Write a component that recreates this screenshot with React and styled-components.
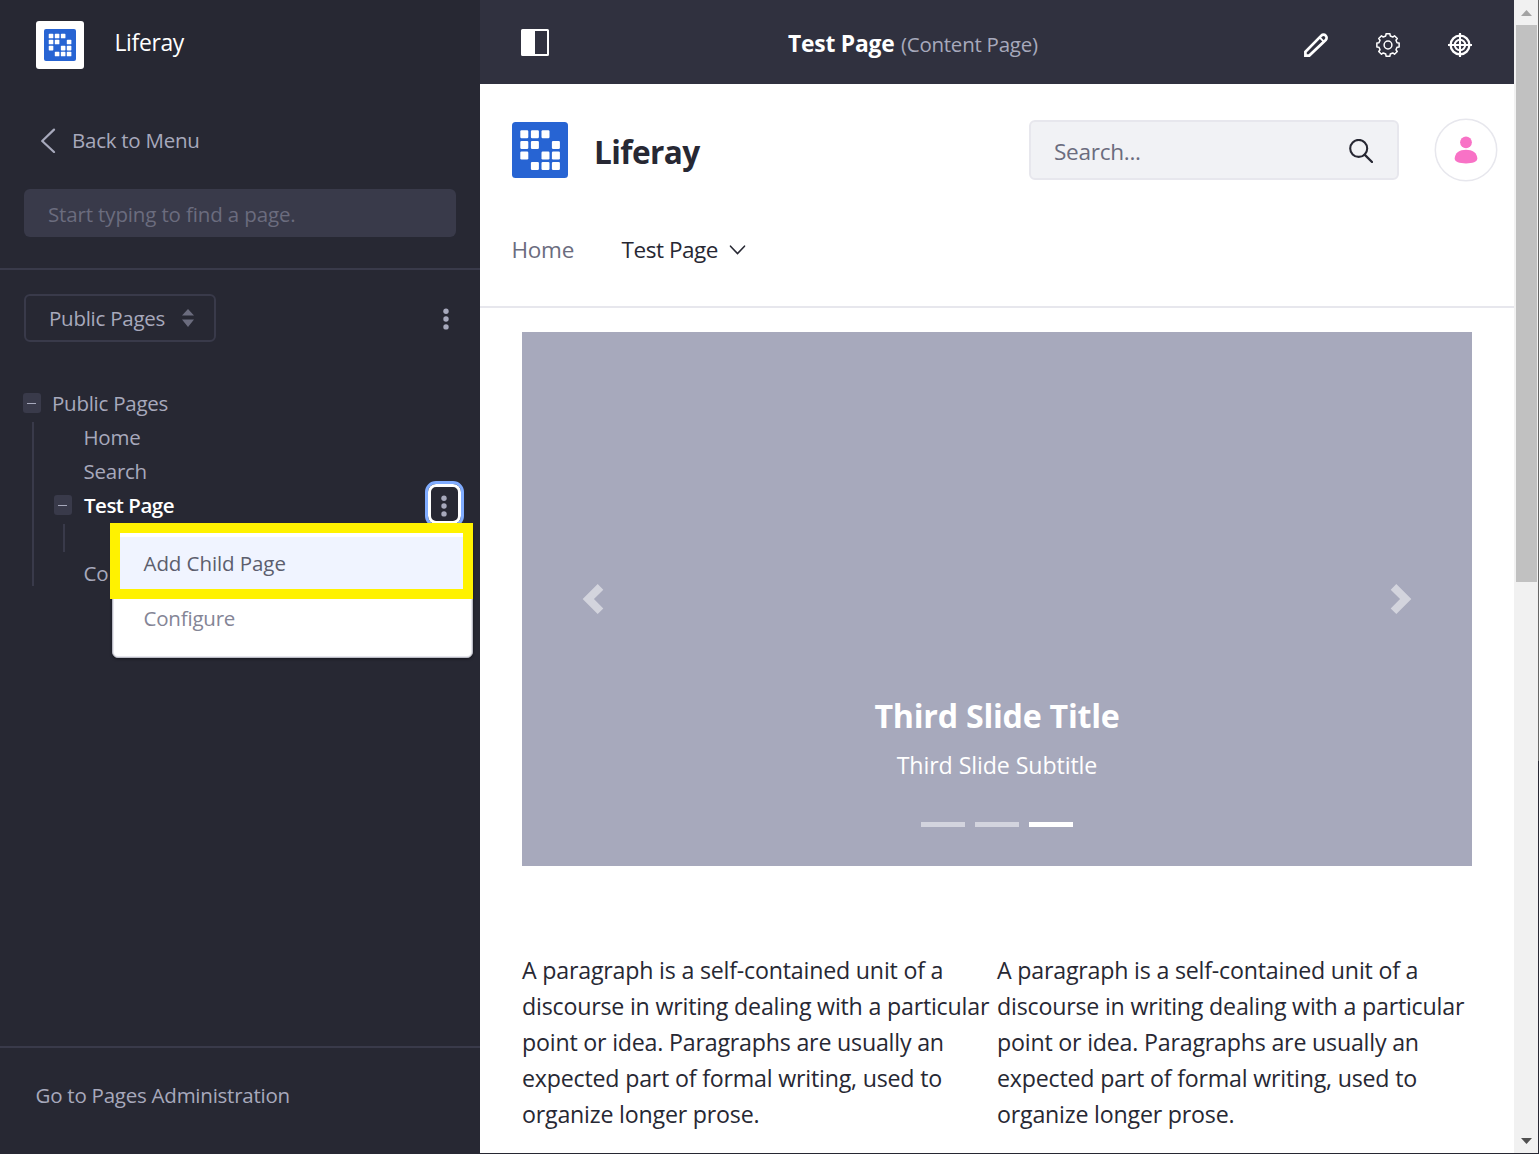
import React from "react";
import styled, { createGlobalStyle, css } from "styled-components";

const color = {
  sidebar: "#272833",
  bar: "#30313f",
  line: "#393a4a",
  muted: "#a7a9bc",
  faint: "#6b6c7e",
  ink: "#272833",
  border: "#e7e7ed",
};

const GlobalStyle = createGlobalStyle`
  *, *::before, *::after { box-sizing: border-box; }
  body {
    margin: 0;
    overflow: hidden;
    font-family: "Open Sans", "Noto Sans", sans-serif;
    font-size: 20.5px;
    letter-spacing: -0.25px;
    color: ${color.ink};
  }
  svg { display: block; flex: none; }
`;

const Shell = styled.div`
  display: grid;
  grid-template-columns: 480px 1fr 24px 1px;
  grid-template-rows: 1153px 1px;
  width: 1539px;
  height: 1154px;
  background: #fff;
`;

/* ---------- Sidebar ---------- */

const Sidebar = styled.aside`
  grid-row: 1 / -1;
  display: flex;
  flex-direction: column;
  background: ${color.sidebar};
  color: ${color.muted};
`;

const SiteHead = styled.div`
  display: flex;
  gap: 30.5px;
  height: 116px;
  padding: 21px 36px 0;
`;

const SiteLogo = styled.div`
  display: grid;
  place-items: center;
  width: 48px;
  height: 48px;
  background: #fff;
  border-radius: 3px;
`;

const SiteName = styled.span`
  height: 44px;
  line-height: 44px;
  font-size: 22.9px;
  letter-spacing: -0.35px;
  color: #fff;
`;

const BackLink = styled.div`
  display: flex;
  align-items: center;
  gap: 16px;
  height: 48px;
  padding-left: 40px;
`;

const FilterField = styled.input`
  width: 432px;
  height: 48px;
  margin: 25px 24px 31px;
  padding: 1px 24px 0;
  border: 0;
  border-radius: 6px;
  background: ${color.line};
  font: inherit;
  letter-spacing: -0.14px;
  color: #fff;
  &::placeholder { color: ${color.faint}; opacity: 1; }
`;

const SetRow = styled.div`
  display: flex;
  align-items: center;
  justify-content: space-between;
  height: 98px;
  padding: 1px 30.5px 0 24px;
  border-top: 2px solid ${color.line};
`;

const SetButton = styled.div`
  display: flex;
  align-items: center;
  justify-content: space-between;
  width: 192px;
  height: 48px;
  margin-top: -1px;
  padding: 0 20.5px 0 23px;
  border: 2px solid ${color.line};
  border-radius: 6px;
`;

const Tree = styled.div`
  flex: 1;
  padding: 20px 0 0 23px;
`;

const TreeRow = styled.div`
  position: relative;
  display: flex;
  align-items: center;
  height: 34px;
  gap: ${(p) => p.$gap ?? 0}px;
  ${(p) => p.$current && css`
    font-weight: 600;
    letter-spacing: -0.5px;
    color: #fff;
  `}
`;

const Branch = styled.div`
  display: flow-root;
  margin: ${(p) => (p.$nested ? "2px 0 4px 9px" : "2px 0 0 9px")};
  height: ${(p) => p.$height}px;
  border-left: 2px solid ${color.line};
`;

const BranchList = styled.div`
  margin-top: -2px;
  padding-left: ${(p) => p.$indent}px;
`;

const Leaf = styled(TreeRow)`
  padding-left: 29.5px;
`;

const Toggle = styled.span`
  display: flex;
  align-items: center;
  width: 18px;
  height: 20px;
  padding-left: 4px;
  border-radius: 3px;
  background: ${color.line};
  &::after {
    content: "";
    width: 9px;
    height: 1px;
    background: ${color.muted};
  }
`;

const FocusedKebab = styled.span`
  position: absolute;
  left: 371px;
  top: -7px;
  display: grid;
  place-items: center;
  width: 39px;
  height: 46px;
  padding: 3px 1px 0 0;
  border: 3px solid #80acff;
  border-radius: 11px;
  box-shadow: inset 0 0 0 3px #fff;
`;

const Menu = styled.div`
  position: absolute;
  left: 58px;
  top: 38px;
  z-index: 2;
  width: 361px;
  height: 132px;
  padding: 10px 1px 0;
  background: #fff;
  border: 1px solid #b9bac4;
  border-radius: 6px;
  box-shadow: inset 0 0 0 1px #e7e7ed, 0 1px 3px rgba(0, 0, 0, 0.45);
  font-weight: 400;
`;

const MenuItem = styled.div`
  height: 54px;
  padding-left: 29.5px;
  line-height: ${(p) => (p.$active ? 52 : 55)}px;
  letter-spacing: ${(p) => (p.$active ? "-0.08px" : "-0.2px")};
  color: ${(p) => (p.$active ? "#5c5e6d" : "#848596")};
  background: ${(p) => (p.$active ? "#f0f4ff" : "transparent")};
`;

const Highlight = styled.div`
  position: absolute;
  left: 56px;
  top: 35px;
  z-index: 3;
  width: 363px;
  height: 76px;
  border: 10px solid #fff200;
`;

const AdminLink = styled.div`
  height: 108px;
  padding-left: 35.5px;
  border-top: 2px solid ${color.line};
  line-height: 95px;
  letter-spacing: -0.24px;
`;

/* ---------- Page ---------- */

const Page = styled.main`
  min-width: 0;
  overflow: hidden;
`;

const ControlBar = styled.header`
  display: grid;
  grid-template-columns: 267px 1fr auto;
  align-items: center;
  height: 84px;
  padding: 0 42px 0 41px;
  background: ${color.bar};
  color: #fff;
`;

const PageTitle = styled.div`
  display: flex;
  align-items: center;
  gap: 6.5px;
  padding-top: 3px;
`;

const Strong = styled.strong`
  font-size: 22.8px;
  letter-spacing: -0.2px;
`;

const Kind = styled.span`
  color: ${color.muted};
`;

const Actions = styled.div`
  display: flex;
  gap: 48px;
  padding-top: 6px;
`;

const Masthead = styled.div`
  display: flex;
  align-items: center;
  height: 132px;
  padding: 0 16px 0 32px;
`;

const Brand = styled.h1`
  flex: 1;
  margin: 0;
  padding: 3px 0 0 26px;
  font-size: 31.6px;
  line-height: 40px;
  letter-spacing: -0.6px;
`;

const SearchBox = styled.div`
  display: flex;
  align-items: center;
  justify-content: space-between;
  width: 370px;
  height: 60px;
  padding: 2px 24px 0 23px;
  margin-right: 35px;
  border: 2px solid ${color.border};
  border-radius: 6px;
  background: #f1f2f5;
  font-size: 22.6px;
  letter-spacing: -0.3px;
  color: ${color.faint};
`;

const Nav = styled.nav`
  display: flex;
  align-items: center;
  height: 92px;
  padding: 0 0 23px 31.5px;
  border-bottom: 2px solid ${color.border};
  font-size: 22.5px;
`;

const NavItem = styled.span`
  display: flex;
  align-items: center;
  gap: 11px;
  margin-right: 47.5px;
  color: ${(p) => (p.$current ? color.ink : color.faint)};
  letter-spacing: ${(p) => (p.$current ? "-0.45px" : "-0.25px")};
`;

const Carousel = styled.section`
  display: grid;
  grid-template-columns: 142px 1fr 142px;
  align-items: center;
  justify-items: center;
  width: 950px;
  height: 534px;
  margin: 24px 0 86px 42px;
  background: ${color.muted};
  color: #fff;
`;

const Caption = styled.div`
  align-self: end;
  display: flex;
  flex-direction: column;
  align-items: center;
  padding-bottom: 39px;
`;

const SlideTitle = styled.h2`
  margin: 0;
  font-size: 32.2px;
  line-height: 44px;
  letter-spacing: -0.25px;
`;

const SlideText = styled.p`
  margin: 9px 0 39px;
  font-size: 23.2px;
  line-height: 36px;
  letter-spacing: -0.1px;
`;

const Indicators = styled.div`
  display: flex;
  gap: 10px;
`;

const Indicator = styled.span`
  width: 44px;
  height: 5px;
  background: #fff;
  opacity: ${(p) => (p.$active ? 1 : 0.5)};
`;

const Columns = styled.div`
  display: grid;
  grid-template-columns: 475px 475px;
  padding-left: 42px;
`;

const Paragraph = styled.p`
  margin: 0;
  font-size: 23.2px;
  line-height: 36px;
  letter-spacing: -0.2px;
`;

/* ---------- Window edge ---------- */

const Scrollbar = styled.div`
  display: flex;
  flex-direction: column;
  align-items: center;
  background: #f1f1f1;
`;

const ScrollArrow = styled.span`
  width: 11px;
  height: 6px;
  margin: ${(p) => (p.$down ? "556px 0 0 1px" : "10px 0 9px 1px")};
  background: ${(p) => (p.$down ? "#505050" : "#a3a3a3")};
  clip-path: ${(p) => (p.$down ? "polygon(0 0, 100% 0, 50% 100%)" : "polygon(50% 0, 100% 100%, 0 100%)")};
`;

const Thumb = styled.span`
  width: 21px;
  height: 557px;
  background: #c1c1c1;
`;

const RightEdge = styled.div`
  background: linear-gradient(#666 761px, ${color.sidebar} 761px);
`;

const BottomEdge = styled.div`
  grid-column: 2 / -1;
  background: ${color.sidebar};
`;

/* ---------- Icons ---------- */

const stops = [8.3, 18.9, 29.5, 39.9];
const cells = [
  [0, 0], [1, 0], [2, 0],
  [0, 1], [1, 1], [3, 1],
  [0, 2], [2, 2], [3, 2],
  [1, 3], [2, 3], [3, 3],
];

const LogoMark = ({ size }) => (
  <svg width={size} height={size} viewBox="0 0 56 56">
    <rect width="56" height="56" rx="3.5" fill="#2764d3" />
    {cells.map(([c, r]) => (
      <rect key={`${c}${r}`} x={stops[c]} y={stops[r]} width="8" height="8" rx="1.2" fill="#fff" />
    ))}
  </svg>
);

const Kebab = () => (
  <svg width="8" height="24" viewBox="0 0 8 24" fill={color.muted}>
    <circle cx="4" cy="4.2" r="2.7" />
    <circle cx="4" cy="12" r="2.7" />
    <circle cx="4" cy="19.9" r="2.7" />
  </svg>
);

const gearPath = (() => {
  const pts = [];
  for (let i = 0; i < 8; i += 1) {
    [[-14, 9.3], [-10, 11.3], [10, 11.3], [14, 9.3]].forEach(([deg, r]) => {
      const a = ((i * 45 + deg) * Math.PI) / 180;
      pts.push(`${(12 + r * Math.sin(a)).toFixed(2)} ${(12 - r * Math.cos(a)).toFixed(2)}`);
    });
  }
  return `M${pts.join("L")}Z`;
})();

const Pencil = () => (
  <svg width="24" height="24" viewBox="0 0 24 24" fill="none" stroke="#fff" strokeWidth="2.7">
    <path d="M1.4 22.6V18.9L17.3 2.6A3.1 3.1 0 0 1 21.7 7L5.3 22.6Z" />
    <path d="M15.6 4.4L19.8 8.6" strokeWidth="2" />
  </svg>
);

const Gear = () => (
  <svg width="24" height="24" viewBox="0 0 24 24" fill="none" stroke="#fff" strokeWidth="1.5" strokeLinejoin="round">
    <path d={gearPath} />
    <circle cx="12" cy="12" r="3.9" />
  </svg>
);

const Target = () => (
  <svg width="24" height="24" viewBox="0 0 24 24" fill="none" stroke="#fff" strokeWidth="2.3">
    <circle cx="12" cy="12" r="9.4" />
    <circle cx="12" cy="12" r="5.2" strokeWidth="2" />
    <path d="M12 0V24M0 12H24" strokeWidth="2.1" />
  </svg>
);

const Magnifier = () => (
  <svg width="24" height="24" viewBox="0 0 24 24" fill="none" stroke={color.ink} strokeWidth="2.1">
    <circle cx="9.7" cy="9.4" r="8.5" />
    <path d="M15.6 15.6L23 23" strokeLinecap="round" strokeWidth="2.3" />
  </svg>
);

const Avatar = () => (
  <svg width="64" height="64" viewBox="0 0 64 64">
    <circle cx="32" cy="32" r="30.7" fill="#fff" stroke={color.border} strokeWidth="1.5" />
    <circle cx="32" cy="24.3" r="5.9" fill="#f872c6" />
    <path d="M20.7 40.6C20.7 35 25.6 31.7 32 31.7S43.3 35 43.3 40.6C43.3 44.2 38.6 45.4 32 45.4S20.7 44.2 20.7 40.6Z" fill="#f872c6" />
  </svg>
);

export default function App() {
  const copy =
    "A paragraph is a self-contained unit of a discourse in writing dealing with a particular point or idea. Paragraphs are usually an expected part of formal writing, used to organize longer prose.";

  return (
    <>
      <GlobalStyle />
      <Shell>
        <Sidebar>
          <SiteHead>
            <SiteLogo><LogoMark size={32} /></SiteLogo>
            <SiteName>Liferay</SiteName>
          </SiteHead>
          <BackLink>
            <svg width="16" height="26" viewBox="0 0 16 26" fill="none" stroke={color.muted} strokeWidth="2.2" strokeLinecap="round" strokeLinejoin="round">
              <path d="M14 2.6L2.2 14L14 25" />
            </svg>
            Back to Menu
          </BackLink>
          <FilterField placeholder="Start typing to find a page." />
          <SetRow>
            <SetButton>
              Public Pages
              <svg width="12" height="18" viewBox="0 0 12 18" fill={color.faint}>
                <path d="M6 0L12 6.6H0ZM6 18L0 10.6H12Z" />
              </svg>
            </SetButton>
            <Kebab />
          </SetRow>
          <Tree>
            <TreeRow $gap={11}><Toggle />Public Pages</TreeRow>
            <Branch $height={164}>
              <BranchList $indent={20}>
                <Leaf>Home</Leaf>
                <Leaf>Search</Leaf>
                <TreeRow $gap={12} $current>
                  <Toggle />Test Page
                  <FocusedKebab><Kebab /></FocusedKebab>
                  <Menu>
                    <MenuItem $active>Add Child Page</MenuItem>
                    <MenuItem>Configure</MenuItem>
                  </Menu>
                  <Highlight />
                </TreeRow>
                <Branch $nested $height={28} />
                <Leaf>Co</Leaf>
              </BranchList>
            </Branch>
          </Tree>
          <AdminLink>Go to Pages Administration</AdminLink>
        </Sidebar>

        <Page>
          <ControlBar>
            <svg width="28" height="27" viewBox="0 0 28 27">
              <rect x="1" y="1" width="26" height="25" rx="0.5" fill="none" stroke="#fff" strokeWidth="2" />
              <rect x="1" y="1" width="13" height="25" fill="#fff" />
            </svg>
            <PageTitle>
              <Strong>Test Page</Strong>
              <Kind>(Content Page)</Kind>
            </PageTitle>
            <Actions><Pencil /><Gear /><Target /></Actions>
          </ControlBar>
          <Masthead>
            <LogoMark size={56} />
            <Brand>Liferay</Brand>
            <SearchBox>Search...<Magnifier /></SearchBox>
            <Avatar />
          </Masthead>
          <Nav>
            <NavItem>Home</NavItem>
            <NavItem $current>
              Test Page
              <svg width="17" height="11" viewBox="0 0 17 11" fill="none" stroke={color.ink} strokeWidth="1.6" strokeLinecap="round">
                <path d="M1.5 2.2L8.5 9.5L15.5 2.2" />
              </svg>
            </NavItem>
          </Nav>
          <Carousel>
            <svg width="30" height="30" viewBox="0 0 8 8" fill="#fff" opacity="0.5">
              <path d="M5.25 0l-4 4 4 4 1.5-1.5L4.25 4l2.5-2.5L5.25 0z" />
            </svg>
            <Caption>
              <SlideTitle>Third Slide Title</SlideTitle>
              <SlideText>Third Slide Subtitle</SlideText>
              <Indicators><Indicator /><Indicator /><Indicator $active /></Indicators>
            </Caption>
            <svg width="30" height="30" viewBox="0 0 8 8" fill="#fff" opacity="0.5">
              <path d="M2.75 0l-1.5 1.5L3.75 4l-2.5 2.5L2.75 8l4-4-4-4z" />
            </svg>
          </Carousel>
          <Columns>
            <Paragraph>{copy}</Paragraph>
            <Paragraph>{copy}</Paragraph>
          </Columns>
        </Page>

        <Scrollbar>
          <ScrollArrow />
          <Thumb />
          <ScrollArrow $down />
        </Scrollbar>
        <RightEdge />
        <BottomEdge />
      </Shell>
    </>
  );
}
